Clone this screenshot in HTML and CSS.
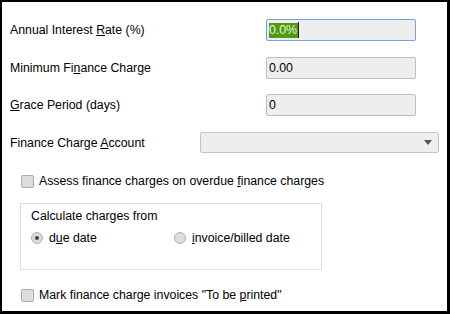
FILE: index.html
```html
<!DOCTYPE html>
<html>
<head>
<meta charset="utf-8">
<link rel="stylesheet" href="styles.css">
</head>
<body>
<div class="frame">
  <div class="row r1">
    <span class="label">Annual Interest <u>R</u>ate (%)</span>
    <div class="field focus"><span class="sel">0.0%</span><span class="caret"></span></div>
  </div>
  <div class="row r2">
    <span class="label">Minimum Fi<u>n</u>ance Charge</span>
    <div class="field">0.00</div>
  </div>
  <div class="row r3">
    <span class="label"><u>G</u>race Period (days)</span>
    <div class="field">0</div>
  </div>
  <div class="row r4">
    <span class="label">Finance Charge <u>A</u>ccount</span>
    <div class="select">
      <svg class="arrow" width="8" height="5" viewBox="0 0 8 5"><path d="M0 0H8L4 5Z" fill="#555"/></svg>
    </div>
  </div>
  <div class="check c1">
    <span class="box"></span>
    <span>Assess finance charges on overdue <u>f</u>inance charges</span>
  </div>
  <div class="group">
    <div class="gtitle">Calculate charges from</div>
    <div class="radios">
      <div class="radio r-due"><span class="dot on"></span><span>d<u>u</u>e date</span></div>
      <div class="radio"><span class="dot"></span><span><u>i</u>nvoice/billed date</span></div>
    </div>
  </div>
  <div class="check c2">
    <span class="box"></span>
    <span>Mark finance charge invoices "To be <u>p</u>rinted"</span>
  </div>
</div>
</body>
</html>
```
FILE: styles.css
```css
html, body {
  margin: 0;
  padding: 0;
  background: #fff;
}
body {
  font-family: "Liberation Sans", Arial, sans-serif;
  font-size: 12.3px;
  color: #000;
}
.frame {
  box-sizing: border-box;
  width: 450px;
  height: 314px;
  border-style: solid;
  border-color: #000;
  border-width: 2px 3px 3px 2px;
  padding: 17px 0 0 8px;
  display: flex;
  flex-direction: column;
}
.row {
  display: flex;
  align-items: center;
  height: 22px;
}
.r2 { margin-top: 16px; }
.r3 { margin-top: 15px; }
.r4 { margin-top: 16px; height: 21px; }
.label {
  width: 256px;
  flex: none;
}
.r4 .label { width: 190px; }
.field {
  box-sizing: border-box;
  width: 150px;
  height: 22px;
  background: #eeeeee;
  border: 1px solid #bdbdbd;
  border-radius: 2px;
  padding: 0 0 0 2px;
  display: flex;
  align-items: center;
  line-height: 14px;
}
.field.focus {
  border-color: #7aa0dc;
}
.sel {
  background: #4f9a10;
  color: #e8f7d8;
  padding: 0 1px 1px 0;
}
.caret {
  width: 1px;
  height: 16px;
  background: #40006a;
}
.select {
  box-sizing: border-box;
  width: 239px;
  height: 21px;
  background: #eeeeee;
  border: 1px solid #c4c4c4;
  border-radius: 2px;
  display: flex;
  align-items: center;
  justify-content: flex-end;
  padding-right: 6px;
}
.check {
  display: flex;
  align-items: center;
  gap: 5px;
  padding-left: 11px;
  height: 14px;
}
.c1 { margin-top: 21px; }
.c2 { margin-top: 18px; }
.box {
  box-sizing: border-box;
  width: 13px;
  height: 13px;
  background: #dcdcdc;
  border: 1px solid #ababab;
  border-radius: 2px;
  flex: none;
}
.group {
  box-sizing: border-box;
  margin: 15px 0 0 10px;
  width: 302px;
  height: 67px;
  border: 1px solid #dddddd;
  padding: 5px 0 0 10px;
}
.gtitle {
  height: 14px;
}
.radios {
  display: flex;
  margin-top: 8px;
}
.radio {
  display: flex;
  align-items: center;
  gap: 6px;
  height: 14px;
}
.r-due { width: 143px; }
.dot {
  box-sizing: border-box;
  width: 12px;
  height: 12px;
  border-radius: 50%;
  background: #dcdcdc;
  border: 1px solid #b0b0b0;
  display: flex;
  align-items: center;
  justify-content: center;
  flex: none;
}
.dot.on::after {
  content: "";
  width: 4px;
  height: 4px;
  border-radius: 50%;
  background: #444;
}
u { text-decoration-thickness: 1px; text-underline-offset: 1px; }
```
